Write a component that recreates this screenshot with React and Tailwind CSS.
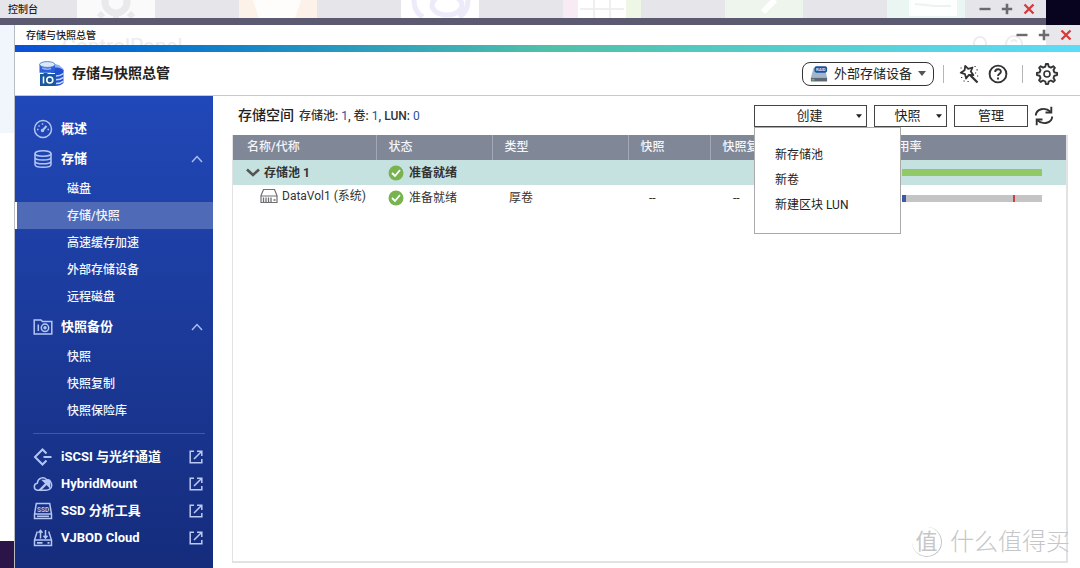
import React, { useState } from "react";

const fontStack = "font-['Roboto','Noto_Sans_CJK_SC',sans-serif]";

const Minus = () => (
  <svg viewBox="0 0 12 12" className="size-3"><path d="M.5 6h11" stroke="#6b6b6f" strokeWidth="2.4" /></svg>
);
const Plus = () => (
  <svg viewBox="0 0 12 12" className="size-3"><path d="M.8 6h10.400M6 .8v10.400" stroke="#6b6b6f" strokeWidth="2.6" /></svg>
);
const Cross = () => (
  <svg viewBox="0 0 12 12" className="size-3"><path d="M1.500 1.500l9 9M10.500 1.500l-9 9" stroke="#d83a3a" strokeWidth="2.3" /></svg>
);

const WindowButtons = () => (
  <div className="flex gap-2.5">
    <button type="button" aria-label="最小化"><Minus /></button>
    <button type="button" aria-label="最大化"><Plus /></button>
    <button type="button" aria-label="关闭"><Cross /></button>
  </div>
);

const Caret = ({ className }) => (
  <svg viewBox="0 0 8 5" className={className} fill="currentColor"><path d="M0 0h8L4 5z" /></svg>
);

const AppLogo = () => (
  <svg viewBox="0 0 26 26" className="size-[26px]">
    <path d="M14 2.500l6 1.500 4.500 4v3L15 12z" fill="#8fb3ee" />
    <path d="M12 8c4-2.500 9-2 12.500 1v13c-2 2-5 3-8.500 3V12h-4z" fill="#2450cf" />
    <path d="M17 15q4.500 0 7.500-2.500M17 18.800q4.500 0 7.500-2.500M17 22.600q4.500 0 7.500-2.500" stroke="#c6d8f7" strokeWidth="1.500" fill="none" />
    <path d="M.5 3.500v8.300H14c1.500-1 2-2 2-3V3.500z" fill="#2c5fdc" />
    <path d="M3 7q5 2 9 .5" stroke="#8db0f0" strokeWidth="1.500" fill="none" />
    <ellipse cx="8.300" cy="3.500" rx="7.700" ry="2.900" fill="#dbe8fa" stroke="#4a7fd0" strokeWidth=".9" />
    <path d="M1 13h3l1-1h3l1 1h7v12H1z" fill="#17599c" />
    <path d="M4.500 15.500v7" stroke="#fff" strokeWidth="1.500" />
    <circle cx="10.800" cy="19" r="3" fill="none" stroke="#fff" strokeWidth="1.600" />
  </svg>
);

const RaidIcon = () => (
  <svg viewBox="0 0 20 18" className="h-[18px] w-5">
    <path d="M4 2h12.500L19 13H1z" fill="#9fb6cc" />
    <path d="M1 13h18v4.300H1z" fill="#5d6872" />
    <path d="M2 15.500h3" stroke="#7ed36a" strokeWidth="1.200" />
    <rect x="5" y=".5" width="14" height="7" rx="2" fill="#1f4f9e" />
    <text x="12" y="5.800" fontSize="4.800" fontWeight="700" textAnchor="middle" fill="#dbe8fa">RAID</text>
  </svg>
);

const WandIcon = () => (
  <svg viewBox="0 0 20 20" className="size-5" fill="none" stroke="#333">
    <path d="M6.200 1.800l3 3 4.300-1.300-1.700 4 2.600 3.600-4.500-.2-2.800 3.600-1.100-4.400L1.700 8.700l3.900-2.400z" strokeWidth="1.800" strokeLinejoin="round" />
    <path d="M11.500 11.500l7 7" strokeWidth="2.300" />
    <path d="M15.500 2.500h1.200M17.500 5.800h1.200M16 9h1.200M2 13.500h1.200M4.500 17h1.200M8.500 17.500h1.200M18 12h1.200M1.500 4h1.200" strokeWidth="1.200" />
  </svg>
);

const HelpIcon = () => (
  <svg viewBox="0 0 20 20" className="size-5" fill="none" stroke="#333">
    <circle cx="10" cy="10" r="8.400" strokeWidth="1.900" />
    <path d="M7.200 8c0-3.700 5.700-3.600 5.700-.3 0 2-2.900 2.100-2.900 4.300" strokeWidth="1.900" />
    <path d="M10 13.400v2" strokeWidth="2" />
  </svg>
);

const GearIcon = () => (
  <svg viewBox="0 0 24 24" className="size-6" fill="none" stroke="#333" strokeWidth="1.900" strokeLinejoin="round">
    <path d="M10.300 4.600l.6-2.600h2.200l.6 2.600 2.300 1 2.300-1.400 1.600 1.600-1.400 2.300.9 2.300 2.700.6v2.100l-2.700.6-.9 2.300 1.400 2.300-1.600 1.600-2.300-1.400-2.300 1-.6 2.600h-2.200l-.6-2.600-2.300-1-2.300 1.400-1.600-1.600 1.400-2.300-.9-2.300-2.700-.6V11l2.700-.6.9-2.300-1.400-2.300 1.600-1.600 2.300 1.400z" />
    <circle cx="12" cy="12" r="3" strokeWidth="1.600" />
  </svg>
);

const RefreshIcon = () => (
  <svg viewBox="0 0 20 20" className="size-5" fill="none" stroke="#333" strokeWidth="1.900">
    <path d="M1.800 9.500C2.100 3 11 .5 16.500 5.800M18.200 10.500C17.900 17 9 19.500 3.500 14.200" />
    <path d="M17.300 .8v5.700h-5.800M2.700 19.200v-5.700h5.800" />
  </svg>
);

const OverviewIcon = () => (
  <>
    <circle cx="10" cy="10" r="8.500" />
    <path d="M9.500 11.500L13.500 7" strokeWidth="2" />
    <path d="M4 10.500h1.500M5.500 6.500l1 1M9.500 4.200v1.500M14.500 10.500H16" />
    <circle cx="9.500" cy="11.500" r="1" />
  </>
);
const StorageIcon = () => (
  <>
    <ellipse cx="10" cy="4.500" rx="8" ry="2.800" />
    <path d="M2 4.500v11c0 3.800 16 3.800 16 0v-11M2 8.200c0 3.800 16 3.800 16 0M2 11.900c0 3.800 16 3.800 16 0" />
  </>
);
const SnapshotIcon = () => (
  <>
    <path d="M1.200 4.500V17h17.600V4.500H9.500L8 3H1.200z" />
    <path d="M5.300 7.500v6.500" />
    <circle cx="12" cy="10.800" r="3.700" />
    <circle cx="12" cy="10.800" r="1" fill="currentColor" />
  </>
);
const IscsiIcon = () => (
  <path d="M13.500 6.500L9.500 2.500 2 10l7.500 7.500 4-4M10.500 10H18.500" strokeWidth="2" />
);
const HybridIcon = () => (
  <>
    <path d="M7 16.200H4.500C.3 15.500.3 9.800 4.300 9.200 4.800 4 10.500 2.200 13.500 5.500c4.700 0 7 7 3.200 9.700-1 .8-2.200 1-3.700 1z" />
    <path d="M6.500 16.500L14 9" strokeWidth="2.400" />
    <path d="M10 6.500h6.500V13z" fill="currentColor" />
  </>
);
const SsdIcon = () => (
  <>
    <path d="M3.300 2.500h13.400l1.800 10.500v4.500h-17V13z" />
    <path d="M1.500 13h17" />
    <path d="M4 15.300h12" />
    <text x="10" y="10.500" fontSize="6.500" fontWeight="700" textAnchor="middle" fill="currentColor" stroke="none">SSD</text>
  </>
);
const VjbodIcon = () => (
  <>
    <path d="M4.300 3.500L1.500 12v5.500h17V12l-2.800-8.500M1.500 12h17" />
    <path d="M7.500 10.500V2.500M5.500 4.800l2-2.300 2 2.300M12.500 2v8M10.500 7.700l2 2.300 2-2.300" />
    <path d="M4 14.800h5.500M14.500 14.800h2" strokeWidth="1.800" />
  </>
);

const NavIcon = ({ children }) => (
  <svg viewBox="0 0 20 20" className="size-5 shrink-0 text-[#b4c6f5]" fill="none" stroke="currentColor" strokeWidth="1.500">
    {children}
  </svg>
);

const ExternalIcon = () => (
  <svg viewBox="0 0 14 14" className="size-3.5 text-[#bccaf3]" fill="none" stroke="currentColor" strokeWidth="1.500">
    <path d="M5 1.200H1.200v11.600h11.600V9M8 1.200h4.800V6M12.500 1.500L5 9" />
  </svg>
);

const Check = () => (
  <svg viewBox="0 0 16 16" className="size-4 shrink-0">
    <circle cx="8" cy="8" r="7.500" fill="#78b350" />
    <path d="M4 8l3 3 5-6" fill="none" stroke="#fff" strokeWidth="1.800" />
  </svg>
);

const VolumeIcon = () => (
  <svg viewBox="0 0 18 16" className="h-4 w-[18px] shrink-0" fill="none" stroke="#6f6f73">
    <path d="M3.500 1.500h11l2.500 6v7H1v-7zM1 8h16" strokeWidth="1.200" />
    <path d="M3.500 9.500v5M6 9.500v5M8.500 9.500v5M11 9.500v5" strokeWidth="1.300" />
    <path d="M13.500 12h2" strokeWidth="1.600" />
  </svg>
);

const groups = [
  { label: "存储", icon: <StorageIcon />, height: "h-8", items: ["磁盘", "存储/快照", "高速缓存加速", "外部存储设备", "远程磁盘"] },
  { label: "快照备份", icon: <SnapshotIcon />, height: "h-[33px]", items: ["快照", "快照复制", "快照保险库"] },
];

const links = [
  { label: "iSCSI 与光纤通道", icon: <IscsiIcon /> },
  { label: "HybridMount", icon: <HybridIcon /> },
  { label: "SSD 分析工具", icon: <SsdIcon /> },
  { label: "VJBOD Cloud", icon: <VjbodIcon /> },
];

const Sidebar = () => {
  const [active, setActive] = useState("存储/快照");

  return (
    <nav className="w-[198px] shrink-0 bg-linear-to-b from-[#2148b8] to-[#152c7c] pt-[19px] text-[13px] font-bold text-white">
      <a href="#overview" className="flex h-7 items-center gap-2 pl-[18px]">
        <NavIcon><OverviewIcon /></NavIcon>
        概述
      </a>
      {groups.map((group) => (
        <div key={group.label}>
          <button type="button" className={`flex w-full items-center gap-2 pr-2.5 pl-[18px] ${group.height}`}>
            <NavIcon>{group.icon}</NavIcon>
            {group.label}
            <svg viewBox="0 0 12 8" className="ml-auto h-2 w-3" fill="none" stroke="#a9bdf2" strokeWidth="1.500">
              <path d="M1 7l5-5.500L11 7" />
            </svg>
          </button>
          <ul className="text-[12px] font-medium text-[#f2f5fd]">
            {group.items.map((item) => (
              <li key={item}>
                <a
                  href="#item"
                  onClick={() => setActive(item)}
                  className={`flex h-[27px] items-center border-l-2 pl-[50px] ${
                    active === item ? "border-white bg-[#4f6bb8]" : "border-transparent"
                  }`}
                >
                  {item}
                </a>
              </li>
            ))}
          </ul>
        </div>
      ))}
      <hr className="mt-[9px] mr-2 mb-[9px] ml-[18px] border-[#3f58a8]" />
      {links.map((link) => (
        <a key={link.label} href="#app" className="flex h-[27px] items-center gap-2 pr-2.5 pl-[18px]">
          <NavIcon>{link.icon}</NavIcon>
          {link.label}
          <span className="ml-auto"><ExternalIcon /></span>
        </a>
      ))}
    </nav>
  );
};

const Toolbar = () => {
  const [open, setOpen] = useState(true);

  return (
    <div className="flex h-[39px] items-center gap-[7px] pr-[26px] pl-[25px]">
      <h2 className="text-[14px] font-medium text-[#222]">存储空间</h2>
      <p className="-ml-0.5 text-[12px] font-medium text-[#333]">
        存储池: <b className="font-normal text-[#2a5298]">1</b>, 卷: <b className="font-normal text-[#2a5298]">1</b>, LUN:{" "}
        <b className="font-normal text-[#2a5298]">0</b>
      </p>
      <div className="relative ml-auto">
        <button
          type="button"
          onClick={() => setOpen(!open)}
          className="flex h-[22px] w-[113px] items-center border border-[#444] pr-1 pl-2 text-[13px]"
        >
          <span className="flex-1">创建</span>
          <Caret className="h-1 w-1.5" />
        </button>
        {open && (
          <ul className="absolute top-[22px] left-0 z-10 w-[147px] border border-[#aaa] bg-white py-[15px] text-[12px] text-[#222]">
            {["新存储池", "新卷", "新建区块 LUN"].map((item) => (
              <li key={item}>
                <button type="button" className="block h-[25px] w-full pl-5 text-left">{item}</button>
              </li>
            ))}
          </ul>
        )}
      </div>
      <button type="button" className="flex h-[22px] w-[73px] items-center border border-[#444] pr-1 pl-1 text-[13px]">
        <span className="flex-1">快照</span>
        <Caret className="h-1 w-1.5" />
      </button>
      <button type="button" className="h-[22px] w-[74px] border border-[#444] text-[13px] leading-5">管理</button>
      <button type="button" aria-label="刷新" className="-ml-px"><RefreshIcon /></button>
    </div>
  );
};

const VolumeTable = () => (
  <div className="mr-3 mb-[5px] ml-[19px] flex-1 border-r-2 border-b-2 border-l border-[#e2e2e4]">
    <table className="w-full table-fixed text-left text-[12px] text-[#333]">
      <colgroup>
        <col className="w-[143px]" />
        <col className="w-[116px]" />
        <col className="w-[136px]" />
        <col className="w-[82px]" />
        <col className="w-[163px]" />
        <col />
      </colgroup>
      <thead>
        <tr className="h-[25px] bg-[#808797] text-[#f4f5f8]">
          {["名称/代称", "状态", "类型", "快照", "快照复制", "使用率"].map((name) => (
            <th key={name} className="border-l border-[#a3a8b4] pb-0.5 pl-3 font-medium first:border-l-0 first:pl-3.5">
              {name}
            </th>
          ))}
        </tr>
      </thead>
      <tbody>
        <tr className="h-[25px] bg-[#c5e2e1] font-bold">
          <td>
            <span className="flex items-center gap-1 pl-[13px]">
              <svg viewBox="0 0 14 9" className="h-[9px] w-3.5" fill="none" stroke="#555" strokeWidth="2.600">
                <path d="M1 1.500l6 5.500 6-5.500" />
              </svg>
              存储池 1
            </span>
          </td>
          <td>
            <span className="flex items-center gap-[5px] pl-3"><Check />准备就绪</span>
          </td>
          <td />
          <td />
          <td />
          <td className="pr-6 pl-[29px]">
            <div className="h-[7px] bg-[#90c965]" />
          </td>
        </tr>
        <tr className="h-[26px]">
          <td className="pb-1">
            <span className="flex items-center gap-1 pl-[27px] whitespace-nowrap"><VolumeIcon />DataVol1 (系统)</span>
          </td>
          <td>
            <span className="flex items-center gap-[5px] pl-3"><Check />准备就绪</span>
          </td>
          <td className="pl-[17px]">厚卷</td>
          <td className="pl-[21px]">--</td>
          <td className="pl-[23px]">--</td>
          <td className="pr-6 pl-[29px]">
            <div className="flex h-[7px] bg-[#c4c4c5]">
              <span className="w-[3%] bg-[#3f57a8]" />
              <span className="ml-[76%] w-[2%] bg-[#cf3f3f]" />
            </div>
          </td>
        </tr>
      </tbody>
    </table>
  </div>
);

// Faded desktop icons that show through the inactive window's title bar
const GhostTiles = () => (
  <div className="flex gap-[84px] overflow-hidden">
    <svg viewBox="0 0 78 18" className="h-[18px] w-[78px] bg-[#fafafb]">
      <circle cx="39" cy="2" r="11" fill="none" stroke="#e9e9eb" strokeWidth="7" />
      <path d="M26 13l-4 4M52 13l4 4M39 14v4" stroke="#e9e9eb" strokeWidth="6" />
    </svg>
    <svg viewBox="0 0 78 18" className="h-[18px] w-[78px] bg-[#fdf2ea]">
      <path d="M14 0h48l-6 18H20z" fill="#fffdfb" />
    </svg>
    <svg viewBox="0 0 78 18" className="h-[18px] w-[78px] bg-white" fill="none" stroke="#ebebf9" strokeWidth="5">
      <path d="M13 0q0 12 9 17M67 0q0 12-9 17" />
      <ellipse cx="46" cy="5" rx="15" ry="10" />
    </svg>
    <svg viewBox="0 0 78 18" className="h-[18px] w-[78px] bg-white">
      <path d="M0 0h15v18H0z" fill="#f8ebf3" />
      <path d="M63 0h15v18H63z" fill="#eef6e6" />
      <path d="M31 0v18M47 0v18M17 9h44" stroke="#efeff1" strokeWidth="2" />
    </svg>
    <svg viewBox="0 0 78 18" className="h-[18px] w-[78px] bg-[#eef5ec]">
      <path d="M38 12L50 0" stroke="#fff" strokeWidth="6" />
    </svg>
    <svg viewBox="0 0 78 18" className="h-[18px] w-[78px] bg-[#eaf6f1]">
      <path d="M22 0h48v16H22z" fill="#fdfefe" />
      <path d="M28 4l20 2h16" stroke="#edf1f0" strokeWidth="2" fill="none" />
    </svg>
  </div>
);

const App = () => {
  return (
    <div className={`relative flex min-h-screen flex-col overflow-hidden bg-white text-[#222] ${fontStack}`}>
      <div className="flex bg-[#080420]">
        <div className="mr-[34px] flex-1 border-b-[7px] border-[#5b5a70] bg-[#e6e5ea]">
          <div className="flex h-[18px] items-center">
            <span className="w-[77px] shrink-0 pl-2 text-[10px] font-medium">控制台</span>
            <GhostTiles />
            <div className="ml-auto flex pr-[11px]"><WindowButtons /></div>
          </div>
        </div>
      </div>

      <div className="flex flex-1">
        <div className="flex w-[15px] shrink-0 flex-col border-r border-[#b9bcc4]">
          <div className="h-[108px] bg-[#f1f6fc]" />
          <div className="flex-1 bg-white" />
          <div className="h-[27px] bg-[#2b1548]" />
        </div>

        <section className="flex min-w-0 flex-1 flex-col">
          <div className="relative flex h-5 items-center justify-between overflow-hidden bg-linear-to-r from-white from-[1031px] to-[#e8e7eb] to-[1031px] pr-2 pl-[11px]">
            <span aria-hidden="true" className="absolute top-1.5 left-[47px] text-[21px] text-[#ececee]">ControlPanel</span>
            <svg viewBox="0 0 60 20" className="absolute right-[48px] h-5 w-[60px]" fill="none" stroke="#ededf0" strokeWidth="2">
              <circle cx="8" cy="18" r="6" />
              <circle cx="42" cy="19" r="8" />
              <path d="M39 17q3-4 6 0" />
            </svg>
            <h1 className="relative text-[10px] font-medium">存储与快照总管</h1>
            <div className="relative flex"><WindowButtons /></div>
          </div>
          <div className="h-[7px] bg-linear-to-r from-[#0d4fd6] via-[#4fc0a8] via-50% to-[#5cdcf8]" />

          <header className="flex h-11 items-center border-b border-[#c9c9cc] pr-[21px] pl-6">
            <AppLogo />
            <span className="ml-[7px] text-[14px] font-bold">存储与快照总管</span>
            <button
              type="button"
              className="ml-auto flex h-6 w-[132px] items-center gap-1.5 rounded-lg border border-[#333] pr-[7px] pl-[7px] text-[13px] whitespace-nowrap"
            >
              <RaidIcon />
              外部存储设备
              <Caret className="ml-auto h-[5px] w-2 shrink-0 text-[#555]" />
            </button>
            <span className="ml-[9px] h-[18px] w-px bg-[#b5b5b8]" />
            <button type="button" aria-label="工具" className="ml-[15px]"><WandIcon /></button>
            <button type="button" aria-label="帮助" className="ml-[9px]"><HelpIcon /></button>
            <span className="ml-3.5 h-[18px] w-px bg-[#b5b5b8]" />
            <button type="button" aria-label="设置" className="ml-3"><GearIcon /></button>
          </header>

          <div className="flex flex-1">
            <Sidebar />
            <main className="flex min-w-0 flex-1 flex-col bg-white">
              <Toolbar />
              <VolumeTable />
            </main>
          </div>
        </section>
      </div>

      <div className="pointer-events-none absolute right-2.5 bottom-2.5 flex items-center gap-2 text-[#c6c6c8]">
        <span className="flex size-[30px] items-center justify-center rounded-full border-r border-b border-[#c6c6c8] text-[22px]">值</span>
        <span className="text-[24px] leading-8 font-light">什么值得买</span>
      </div>
    </div>
  );
};

export default App;
